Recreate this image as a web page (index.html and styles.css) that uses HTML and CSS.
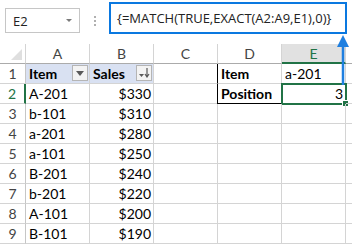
FILE: index.html
```html
<!DOCTYPE html>
<html>
    <head>
        <meta charset="utf-8">
        <title>EXACT match</title>
        <link rel="stylesheet" href="styles.css">
    </head>
    <body>
        <div class="bar">
            <div class="namebox"><span>E2</span><span class="caret"></span></div>
            <div class="dots"><i></i><i></i><i></i></div>
            <div class="formula">{=MATCH(TRUE,EXACT(A2:A9,E1),0)}</div>
        </div>
        <div class="sheet">
            <div class="hd corner"></div>
            <div class="hd">A</div>
            <div class="hd">B</div>
            <div class="hd">C</div>
            <div class="hd">D</div>
            <div class="hd sel">E</div>
            <div class="hd rest"></div>

            <div class="rn">1</div>
            <div class="c th">Item<span class="filter"><svg width="8" height="5" viewBox="0 0 8 5"><path d="M0 0h8L4 5z" fill="#595959"/></svg></span></div>
            <div class="c th">Sales<span class="filter"><svg width="11" height="10" viewBox="0 0 11 10"><path d="M0 6h5L2.5 9z" fill="#595959"/><path d="M8 0v8M6 6l2 3 2-3" stroke="#595959" stroke-width="1.2" fill="none"/></svg></span></div>
            <div class="c"></div>
            <div class="c b bl">Item</div>
            <div class="c">a-201</div>
            <div class="c rest"></div>

            <div class="rn on">2</div>
            <div class="c">A-201</div>
            <div class="c r">$330</div>
            <div class="c"></div>
            <div class="c b bl bb">Position</div>
            <div class="c r active">3<span class="handle"></span></div>
            <div class="c rest"></div>

            <div class="rn">3</div>
            <div class="c">b-101</div>
            <div class="c r">$310</div>
            <div class="c"></div><div class="c"></div><div class="c"></div><div class="c rest"></div>

            <div class="rn">4</div>
            <div class="c">a-201</div>
            <div class="c r">$280</div>
            <div class="c"></div><div class="c"></div><div class="c"></div><div class="c rest"></div>

            <div class="rn">5</div>
            <div class="c">a-101</div>
            <div class="c r">$250</div>
            <div class="c"></div><div class="c"></div><div class="c"></div><div class="c rest"></div>

            <div class="rn">6</div>
            <div class="c">B-201</div>
            <div class="c r">$240</div>
            <div class="c"></div><div class="c"></div><div class="c"></div><div class="c rest"></div>

            <div class="rn">7</div>
            <div class="c">b-201</div>
            <div class="c r">$220</div>
            <div class="c"></div><div class="c"></div><div class="c"></div><div class="c rest"></div>

            <div class="rn">8</div>
            <div class="c">A-101</div>
            <div class="c r">$200</div>
            <div class="c"></div><div class="c"></div><div class="c"></div><div class="c rest"></div>

            <div class="rn">9</div>
            <div class="c">B-101</div>
            <div class="c r">$190</div>
            <div class="c"></div><div class="c"></div><div class="c"></div><div class="c rest"></div>
        </div>
        <!-- callout arrow pointing at the formula bar -->
        <svg class="arrow" width="14" height="50" viewBox="0 0 14 50">
            <path d="M7 10V50" stroke="#1f7fe0" stroke-width="2.5"/>
            <path d="M7 0L1 12h12z" fill="#1f7fe0"/>
        </svg>
    </body>
</html>
```
FILE: styles.css
```css
*{
    margin: 0;
    padding: 0;
    box-sizing: border-box;
}
body{
    width: 352px;
    height: 244px;
    overflow: hidden;
    background: #fff;
    font-family: Lato, "Liberation Sans", sans-serif;
    font-size: 14px;
    color: #000;
    position: relative;
}
.bar{
    height: 44px;
    display: flex;
    align-items: flex-start;
    font-family: "Open Sans", "Liberation Sans", sans-serif;
    font-size: 13px;
    color: #222;
}
.namebox{
    margin: 8px 0 0 5px;
    width: 75px;
    height: 25px;
    border: 1px solid #c6c6c6;
    display: flex;
    align-items: center;
    justify-content: space-between;
    padding: 0 7px 0 7px;
}
.caret{
    width: 0;
    height: 0;
    border-left: 3px solid transparent;
    border-right: 3px solid transparent;
    border-top: 3px solid #7a7a7a;
}
.dots{
    width: 29px;
    height: 25px;
    margin-top: 8px;
    display: flex;
    flex-direction: column;
    align-items: center;
    justify-content: center;
    gap: 2px;
}
.dots i{
    width: 2px;
    height: 2px;
    background: #b0b0b0;
}
.formula{
    margin-top: 2px;
    width: 238px;
    height: 32px;
    border: 2px solid #0a78e0;
    padding: 0 0 0 6px;
    line-height: 28px;
    white-space: nowrap;
}
.sheet{
    display: grid;
    grid-template-columns: 26px repeat(5, 64px) 1fr;
    grid-auto-rows: 20px;
}
.hd{
    height: 20px;
    border-right: 1px solid #d4d4d4;
    border-bottom: 1px solid #ababab;
    text-align: center;
    line-height: 19px;
    color: #444;
    font-size: 14px;
}
.corner{
    position: relative;
}
.corner::after{
    content: "";
    position: absolute;
    right: 3px;
    bottom: 3px;
    border-left: 11px solid transparent;
    border-bottom: 11px solid #dfdfdf;
}
.hd.sel{
    background: #e1e1e1;
    color: #217346;
    border-bottom: 2px solid #217346;
}
.rn{
    border-right: 1px solid #c6c6c6;
    border-bottom: 1px solid #d4d4d4;
    text-align: center;
    line-height: 20px;
    color: #444;
    font-size: 14px;
}
.rn.on{
    color: #217346;
    border-right: 2px solid #217346;
}
.c{
    border-right: 1px solid #d4d4d4;
    border-bottom: 1px solid #d4d4d4;
    padding: 0 3px;
    line-height: 20px;
    white-space: nowrap;
    position: relative;
}
.rest{
    border-right: none;
}
.r{
    text-align: right;
    padding-right: 2px;
}
.b{
    font-weight: bold;
}
.th{
    background: #d9e1f2;
    font-weight: bold;
}
.filter{
    position: absolute;
    right: 1px;
    top: 1px;
    width: 16px;
    height: 16px;
    background: #f3f3f3;
    border: 1px solid #b5b5b5;
    display: flex;
    align-items: center;
    justify-content: center;
}
.bl{
    border-left: 1px solid #000;
    margin-left: -1px;
}
.bb{
    border-bottom: 1px solid #000;
}
.active{
    outline: 2px solid #217346;
    outline-offset: -1px;
}
.handle{
    position: absolute;
    right: -4px;
    bottom: -4px;
    width: 7px;
    height: 7px;
    background: #217346;
    border: 1px solid #fff;
}
.arrow{
    position: absolute;
    left: 336px;
    top: 35px;
}
```
